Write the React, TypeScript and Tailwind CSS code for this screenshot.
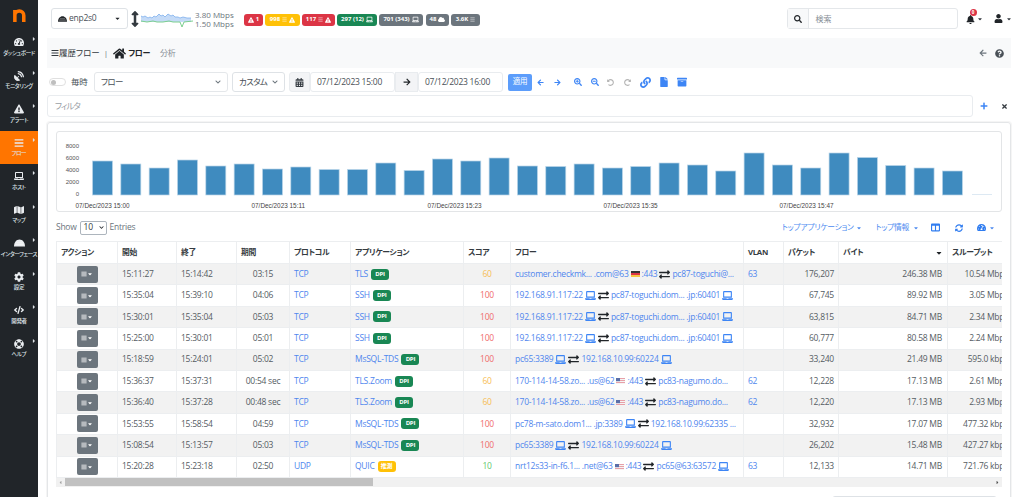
import React from 'react';
import {
  FaArchive, FaArrowLeft, FaArrowRight, FaBars, FaBell, FaCalendarAlt, FaCaretDown, FaChevronDown, FaCloud, FaCode,
  FaCog, FaColumns, FaExchangeAlt, FaExclamationTriangle, FaFile, FaHome, FaLaptop, FaLifeRing, FaLink, FaMap,
  FaPlus, FaQuestionCircle, FaRedoAlt, FaSatelliteDish, FaSearch, FaSearchMinus, FaSearchPlus, FaSyncAlt, FaTachometerAlt,
  FaTimes, FaUndoAlt, FaUser, FaArrowsAltV, FaCaretRight, FaCaretLeft,
} from 'react-icons/fa';

// half dome used by ntopng for network interfaces
const IfaceIcon = ({ className }: { className?: string }) => (
  <svg viewBox="0 0 16 10" className={className} fill="currentColor">
    <path d="M0 10C0 4 3.5 0 8 0s8 4 8 10H0z" />
    <path d="M2 7h12M3.5 4.5h9" stroke="#ffffff" strokeWidth="0.6" />
  </svg>
);

const NAV = [
  { label: 'ダッシュボード', icon: <FaTachometerAlt /> },
  { label: 'モニタリング', icon: <FaSatelliteDish /> },
  { label: 'アラート', icon: <FaExclamationTriangle /> },
  { label: 'フロー', icon: <FaBars />, active: true },
  { label: 'ホスト', icon: <FaLaptop /> },
  { label: 'マップ', icon: <FaMap /> },
  { label: 'インターフェース', icon: <IfaceIcon className="w-[11px] h-[8px]" /> },
  { label: '設定', icon: <FaCog /> },
  { label: '開発者', icon: <FaCode /> },
  { label: 'ヘルプ', icon: <FaLifeRing /> },
];

const BARS = [
  34, 31, 27, 35, 29, 31, 26, 28, 25.5, 25.5, 32, 24.5, 36, 34, 37, 29, 28.5, 31, 27, 28.5, 32, 30, 24, 42, 30, 27, 42, 37.5, 29.5, 27, 24,
];

type Flow = string[];

interface Row {
  start: string;
  end: string;
  dur: string;
  proto: string;
  app: string;
  score: number;
  flow: Flow;
  vlan: string;
  pkts: string;
  bytes: string;
  tput: string;
  guess?: boolean;
}

const SSH: Flow = ['192.168.91.117:22', 'laptop', 'swap', 'pc87-toguchi.dom... .jp:60401', 'laptop'];
const PC65: Flow = ['pc65:3389', 'laptop', 'swap', '192.168.10.99:60224', 'laptop'];
const ZOOM: Flow = ['170-114-14-58.zo... .us@62', 'us', ':443', 'swap', 'pc83-nagumo.do...'];

const ROWS: Row[] = [
  { start: '15:11:27', end: '15:14:42', dur: '03:15', proto: 'TCP', app: 'TLS', score: 60, flow: ['customer.checkmk... .com@63', 'de', ':443', 'swap', 'pc87-toguchi@...'], vlan: '63', pkts: '176,207', bytes: '246.38 MB', tput: '10.54 Mbps' },
  { start: '15:35:04', end: '15:39:10', dur: '04:06', proto: 'TCP', app: 'SSH', score: 100, flow: SSH, vlan: '', pkts: '67,745', bytes: '89.92 MB', tput: '3.05 Mbps' },
  { start: '15:30:01', end: '15:35:04', dur: '05:03', proto: 'TCP', app: 'SSH', score: 100, flow: SSH, vlan: '', pkts: '63,815', bytes: '84.71 MB', tput: '2.34 Mbps' },
  { start: '15:25:00', end: '15:30:01', dur: '05:01', proto: 'TCP', app: 'SSH', score: 100, flow: SSH, vlan: '', pkts: '60,777', bytes: '80.58 MB', tput: '2.24 Mbps' },
  { start: '15:18:59', end: '15:24:01', dur: '05:02', proto: 'TCP', app: 'MsSQL-TDS', score: 100, flow: PC65, vlan: '', pkts: '33,240', bytes: '21.49 MB', tput: '595.0 kbps' },
  { start: '15:36:37', end: '15:37:31', dur: '00:54 sec', proto: 'TCP', app: 'TLS.Zoom', score: 60, flow: ZOOM, vlan: '62', pkts: '12,228', bytes: '17.13 MB', tput: '2.61 Mbps' },
  { start: '15:36:40', end: '15:37:28', dur: '00:48 sec', proto: 'TCP', app: 'TLS.Zoom', score: 60, flow: ZOOM, vlan: '62', pkts: '12,220', bytes: '17.13 MB', tput: '2.93 Mbps' },
  { start: '15:53:55', end: '15:58:54', dur: '04:59', proto: 'TCP', app: 'MsSQL-TDS', score: 100, flow: ['pc78-m-sato.dom1... .jp:3389', 'laptop', 'swap', '192.168.10.99:62335 ...'], vlan: '', pkts: '32,932', bytes: '17.07 MB', tput: '477.32 kbps' },
  { start: '15:08:54', end: '15:13:57', dur: '05:03', proto: 'TCP', app: 'MsSQL-TDS', score: 100, flow: PC65, vlan: '', pkts: '26,202', bytes: '15.48 MB', tput: '427.27 kbps' },
  { start: '15:20:28', end: '15:23:18', dur: '02:50', proto: 'UDP', app: 'QUIC', score: 10, guess: true, flow: ['nrt12s33-in-f6.1... .net@63', 'us', ':443', 'swap', 'pc65@63:63572', 'laptop'], vlan: '63', pkts: '12,133', bytes: '14.71 MB', tput: '721.76 kbps' },
];

const HEADERS = ['アクション', '開始', '終了', '期間', 'プロトコル', 'アプリケーション', 'スコア', 'フロー', 'VLAN', 'パケット', 'バイト', 'スループット'];

const Flag = ({ code }: { code: string }) =>
  code === 'de' ? (
    <svg viewBox="0 0 9 6" className="w-[9px] h-[6px] shrink-0">
      <rect width="9" height="2" fill="#333333" />
      <rect y="2" width="9" height="2" fill="#dc3545" />
      <rect y="4" width="9" height="2" fill="#f5c542" />
    </svg>
  ) : (
    <svg viewBox="0 0 9 6" className="w-[9px] h-[6px] shrink-0">
      <rect width="9" height="6" fill="#e8a0a8" />
      <rect y="1" width="9" height="1" fill="#f4f4f4" />
      <rect y="3" width="9" height="1" fill="#f4f4f4" />
      <rect y="5" width="9" height="1" fill="#f4f4f4" />
      <rect width="4" height="3.2" fill="#5a6fa8" />
    </svg>
  );

const FlowCell = ({ flow }: { flow: Flow }) => (
  <div className="flex items-center gap-[2px] whitespace-nowrap text-[#4f86ee]">
    {flow.map((t, i) => {
      if (t === 'laptop') return <FaLaptop key={i} className="shrink-0 text-[11px] text-[#3d85f5]" />;
      if (t === 'swap') return <FaExchangeAlt key={i} className="shrink-0 text-[11px] text-[#212529]" />;
      if (t === 'de' || t === 'us') return <Flag key={i} code={t} />;
      return <span key={i}>{t}</span>;
    })}
  </div>
);

const Sparkline = () => (
  <svg viewBox="0 0 52 16" className="w-[52px] h-[16px]">
    <path d="M0 5l2 1 2-1 3 2 2-1 2 1 2-2 2 1 3-3 2 2 2-1 2 2 3-3 3 2 2-1 2 2 3 0 2 1 3-1 4 1 4 0v4H0z" fill="#c5dbf7" />
    <path d="M0 5l2 1 2-1 3 2 2-1 2 1 2-2 2 1 3-3 2 2 2-1 2 2 3-3 3 2 2-1 2 2 3 0 2 1 3-1 4 1 4 0" fill="none" stroke="#7fb0ee" strokeWidth="0.8" />
    <path d="M0 10l6 1 6-1 4 1 6 0 6-1 4 1 7 0 2 5 2-5 9-1" fill="none" stroke="#7ccf8e" strokeWidth="1" />
  </svg>
);

const Badge = ({ className, children }: { className: string; children: React.ReactNode }) => (
  <span className={`flex items-center justify-center gap-[2px] h-[12px] rounded-[3px] text-white text-[6px] font-bold whitespace-nowrap ${className}`}>
    {children}
  </span>
);

export default function App() {
  return (
    <div className="flex h-screen overflow-hidden bg-white text-[#212529] [font-family:'Open_Sans','Noto_Sans_CJK_JP',sans-serif] [font-feature-settings:'palt']">
      {/* Sidebar */}
      <aside className="w-[38px] shrink-0 bg-[#212529] flex flex-col text-white">
        <div className="h-[30px] flex items-center justify-center">
          <svg viewBox="0 0 14 14" className="w-[13px] h-[13px]">
            <path d="M2 14V1M2 7a4.8 4.8 0 0 1 9.6 0v7" fill="none" stroke="#ff7500" strokeWidth="3.8" />
          </svg>
        </div>
        {NAV.map((n) => (
          <div
            key={n.label}
            className={`relative h-[33.5px] flex flex-col items-center justify-center gap-[1px] ${n.active ? 'bg-[#ff7500]' : ''}`}
          >
            <span className="h-[11px] flex items-center text-[10px] text-[#e9ecef]">{n.icon}</span>
            <span className="text-[5.5px] tracking-[-0.3px] leading-[8px] whitespace-nowrap text-[#dee2e6] font-medium">{n.label}</span>
            <FaCaretRight className="absolute right-[1px] top-[6px] text-[6px] text-[#dee2e6]" />
          </div>
        ))}
      </aside>

      <main className="flex-1 min-w-0 flex flex-col pl-[9px] pr-[13px]">
        {/* Top bar */}
        <header className="h-[38px] shrink-0 flex items-center pb-[1px]">
          <div className="ml-[4px] w-[77px] h-[21px] border border-[#dee2e6] rounded-[3px] flex items-center px-[6px] gap-[2px] text-[8.5px] tracking-[-0.25px] text-[#495057]">
            <IfaceIcon className="w-[9px] h-[6px] text-[#212529]" />
            <span>enp2s0</span>
            <FaCaretDown className="ml-auto text-[7px] text-[#212529]" />
          </div>
          <FaArrowsAltV className="ml-[-1px] text-[16px] text-[#343a40]" />
          <div className="ml-[-2px]">
            <Sparkline />
          </div>
          <div className="ml-[2px] mt-[1px] w-[44px] text-[8px] leading-[9px] text-[#6c757d] whitespace-nowrap">
            <div>3.80 Mbps</div>
            <div>1.50 Mbps</div>
          </div>
          <div className="ml-[5px] mt-[2px] flex items-center gap-[2px]">
            <Badge className="w-[19px] bg-[#dc3545]">
              <FaExclamationTriangle className="text-[6px]" />1
            </Badge>
            <Badge className="w-[35px] bg-[#ffc107]">
              998 <FaBars className="text-[5px] opacity-70" /> <FaExclamationTriangle className="text-[6px]" />
            </Badge>
            <Badge className="w-[33px] bg-[#dc3545]">
              117 <FaBars className="text-[5px] opacity-70" /> <FaExclamationTriangle className="text-[6px]" />
            </Badge>
            <Badge className="w-[40px] bg-[#198754]">
              297 (12) <FaLaptop className="text-[7px]" />
            </Badge>
            <Badge className="w-[44px] bg-[#6c757d]">
              701 (343) <FaLaptop className="text-[7px]" />
            </Badge>
            <Badge className="w-[23px] ml-[1px] bg-[#6c757d]">
              48 <FaCloud className="text-[7px]" />
            </Badge>
            <Badge className="w-[29px] bg-[#6c757d]">
              3.6K <FaBars className="text-[5px] opacity-70" />
            </Badge>
          </div>
          <div className="ml-auto mr-[-1px] flex items-center">
            <div className="flex h-[21px] w-[171px] border border-[#e4e7ea] rounded-[3px]">
              <div className="w-[21px] bg-[#f8f9fa] border-r border-[#e4e7ea] flex items-center justify-center">
                <FaSearch className="text-[8px] text-[#212529]" />
              </div>
              <span className="pl-[7px] flex items-center text-[8px] text-[#868e96]">検索</span>
            </div>
            <div className="relative ml-[8px] flex items-center">
              <FaBell className="text-[9px] text-[#212529] mt-[2px]" />
              <span className="absolute left-[4px] top-[-4px] w-[7px] h-[7px] rounded-full bg-[#dc3545] text-white text-[4.5px] font-bold flex items-center justify-center">
                0
              </span>
              <FaCaretDown className="ml-[2px] text-[6px] text-[#343a40]" />
            </div>
            <div className="ml-[11.5px] flex items-center">
              <FaUser className="text-[9px] text-[#212529]" />
              <FaCaretDown className="ml-[3px] text-[6px] text-[#343a40]" />
            </div>
          </div>
        </header>

        {/* Breadcrumb */}
        <div className="h-[30px] shrink-0 bg-[#f8f9fa] flex items-center pl-[4px] pr-[7px] text-[#343a40]">
          <FaBars className="text-[8px]" />
          <span className="text-[8.5px]">履歴フロー</span>
          <span className="ml-[4px] text-[8px] text-[#6c757d]">|</span>
          <FaHome className="ml-[5px] text-[13px] text-[#212529]" />
          <span className="ml-[2px] text-[8px] tracking-[-0.4px] font-bold text-[#212529]">フロー</span>
          <span className="ml-[10px] text-[8px] text-[#868e96]">分析</span>
          <FaArrowLeft className="ml-auto text-[8px] text-[#6c757d]" />
          <FaQuestionCircle className="ml-[8px] text-[9px] text-[#495057]" />
        </div>

        {/* Toolbar */}
        <div className="h-[20px] mt-[4px] shrink-0 flex items-stretch text-[8.5px] tracking-[-0.25px] text-[#495057]">
          <div className="flex items-center ml-[2px] w-[45px]">
            <span className="w-[17px] h-[8px] rounded-full border border-[#e0e0e0] flex items-center pl-[1px]">
              <span className="w-[5px] h-[5px] rounded-full bg-[#bfbfbf]" />
            </span>
            <span className="ml-[5px]">毎時</span>
          </div>
          <div className="w-[134px] border border-[#e4e7ea] rounded-[3px] flex items-center justify-between px-[6px]">
            <span className="tracking-[-0.7px]">フロー</span>
            <FaChevronDown className="text-[6px] text-[#6c757d]" />
          </div>
          <div className="ml-[4px] w-[53px] border border-[#dee2e6] rounded-[3px] flex items-center justify-between px-[6px]">
            <span className="tracking-[-0.7px]">カスタム</span>
            <FaChevronDown className="text-[6px] text-[#6c757d]" />
          </div>
          <div className="ml-[4px] w-[21px] bg-[#f3f4f6] border border-[#e9ecef] rounded-l-[3px] flex items-center justify-center">
            <FaCalendarAlt className="text-[9px] text-[#343a40]" />
          </div>
          <div className="w-[85px] border border-[#e9ecef] rounded-[3px] flex items-center pl-[6px]">07/12/2023 15:00</div>
          <div className="w-[23px] bg-[#f3f4f6] border border-[#e9ecef] flex items-center justify-center">
            <FaArrowRight className="text-[8px] text-[#212529]" />
          </div>
          <div className="w-[85px] border border-[#e9ecef] rounded-[3px] flex items-center pl-[6px]">07/12/2023 16:00</div>
          <div className="ml-[5px] w-[24px] h-[17px] self-center bg-[#5c9dfb] rounded-[2px] text-white text-[7.5px] flex items-center justify-center">
            適用
          </div>
          <div className="flex items-center text-[#3d85f5]">
            <FaArrowLeft className="ml-[5px] text-[7px]" />
            <FaArrowRight className="ml-[10px] text-[7px]" />
            <FaSearchPlus className="ml-[12.5px] text-[8px]" />
            <FaSearchMinus className="ml-[9px] text-[8px]" />
            <FaUndoAlt className="ml-[8.5px] text-[7px] text-[#b5b5b5]" />
            <FaRedoAlt className="ml-[10px] text-[7px] text-[#b5b5b5]" />
            <FaLink className="ml-[9px] text-[11px]" />
            <FaFile className="ml-[8px] text-[10px]" />
            <FaArchive className="ml-[8px] text-[10px]" />
          </div>
        </div>

        {/* Filter */}
        <div className="h-[22px] mt-[3px] shrink-0 flex items-center">
          <div className="w-[926px] h-full border border-[#e9ecef] rounded-[3px] flex items-center pl-[7px] text-[8.5px] tracking-[-1px] text-[#9aa0a6]">
            フィルタ
          </div>
          <FaPlus className="ml-[7px] text-[8px] text-[#3d85f5]" />
          <FaTimes className="ml-[13px] text-[7px] text-[#343a40]" />
        </div>

        {/* Card */}
        <section className="mt-[5px] flex-1 border border-[#e4e6e8] rounded-[3px] px-[8px] pt-[8px] shadow-[0_0_0_1px_#f5f5f5]">
          <div className="h-[81px] border border-[#e3e5e7] rounded-[3px]">
            <svg viewBox="0 0 944 79" className="w-[944px] h-[79px]">
              {[8000, 6000, 4000, 2000, 0].map((v, i) => (
                <text key={v} x="22" y={16 + i * 12} textAnchor="end" fontSize="6" fill="#555555" fontFamily="Liberation Sans">
                  {v}
                </text>
              ))}
              {BARS.map((h, i) => (
                <rect key={i} x={35.5 + i * 28.33} y={63 - h} width="20" height={h} fill="#3f8bbf" stroke="#b9d5e8" strokeWidth="0.7" />
              ))}
              <line x1="935" y1="62.5" x2="915" y2="62.5" stroke="#cfe0ee" strokeWidth="0.7" />
              {['15:00', '15:11', '15:23', '15:35', '15:47'].map((t, i) => (
                <text key={t} x={18.5 + i * 176} y="76" fontSize="6.4" fill="#444444" fontFamily="Liberation Sans">
                  07/Dec/2023 {t}
                </text>
              ))}
            </svg>
          </div>

          {/* Datatable controls */}
          <div className="h-[29px] pt-[2px] flex items-center text-[8.5px] tracking-[-0.25px] text-[#6c757d]">
            <span>Show</span>
            <span className="mx-[3px] w-[27px] h-[14px] border border-[#adb5bd] rounded-[2px] flex items-center pl-[3px] text-[#343a40] text-[8.5px]">
              10
              <FaChevronDown className="ml-auto mr-[2px] text-[5px] text-[#212529]" />
            </span>
            <span>Entries</span>
            <div className="ml-auto flex items-center mr-[7px] text-[#4d8bf0]">
              <span className="text-[7.8px] tracking-[-0.3px]">トップアプリケーション</span>
              <FaCaretDown className="ml-[2px] text-[6px]" />
              <span className="ml-[14px] text-[7.8px] tracking-[-0.3px]">トップ情報</span>
              <FaCaretDown className="ml-[4px] text-[6px]" />
              <FaColumns className="ml-[12px] text-[9px] text-[#2f7cf0]" />
              <FaSyncAlt className="ml-[15px] text-[8px] text-[#2f7cf0]" />
              <FaTachometerAlt className="ml-[14px] text-[9px] text-[#2f7cf0]" />
              <FaCaretDown className="ml-[3px] text-[6px]" />
            </div>
          </div>

          {/* Table */}
          <div className="overflow-hidden">
            <table className="table-fixed w-[990px] border-collapse text-[8.5px] tracking-[-0.25px] text-[#555c63]">
              <colgroup>
                <col className="w-[61px]" />
                <col className="w-[59px]" />
                <col className="w-[60px]" />
                <col className="w-[53px]" />
                <col className="w-[61px]" />
                <col className="w-[113px]" />
                <col className="w-[47px]" />
                <col className="w-[233px]" />
                <col className="w-[40px]" />
                <col className="w-[55px]" />
                <col className="w-[109px]" />
                <col className="w-[99px]" />
              </colgroup>
              <thead>
                <tr className="h-[22px] text-[#343a40]">
                  {HEADERS.map((h) => (
                    <th key={h} className="relative border border-[#eceef0] px-[4px] text-left text-[7.8px] tracking-[-0.3px] font-bold whitespace-nowrap">
                      {h}
                      {h === 'バイト' && <FaCaretDown className="absolute right-[4px] top-[7px] text-[8px] text-[#212529]" />}
                    </th>
                  ))}
                </tr>
              </thead>
              <tbody>
                {ROWS.map((r, i) => (
                  <tr key={i} className={`h-[21.4px] ${i % 2 === 0 ? 'bg-[#f2f2f2]' : 'bg-white'}`}>
                    <td className="border border-[#eceef0] p-0">
                      <div className="mx-auto w-[21px] h-[17px] bg-[#6c757d] rounded-[2px] flex items-center justify-center text-white">
                        <FaBars className="text-[6px]" />
                        <FaCaretDown className="text-[6px]" />
                      </div>
                    </td>
                    <td className="border border-[#eceef0] px-[4px]">{r.start}</td>
                    <td className="border border-[#eceef0] px-[4px]">{r.end}</td>
                    <td className="border border-[#eceef0] px-[4px] text-center whitespace-nowrap">{r.dur}</td>
                    <td className="border border-[#eceef0] px-[4px] text-[#4f86ee]">{r.proto}</td>
                    <td className="border border-[#eceef0] px-[4px]">
                      <div className="flex items-center gap-[3px] text-[#4f86ee]">
                        <span>{r.app}</span>
                        {r.guess ? (
                          <span className="h-[11px] w-[18px] justify-center rounded-[3px] bg-[#ffc107] text-white text-[6px] font-bold flex items-center">推測</span>
                        ) : (
                          <span className="h-[11px] w-[18px] justify-center rounded-[3px] bg-[#198754] text-white text-[6px] font-bold flex items-center">DPI</span>
                        )}
                      </div>
                    </td>
                    <td
                      className={`border border-[#eceef0] px-[4px] text-center ${
                        r.score === 100 ? 'text-[#f06c6c]' : r.score === 60 ? 'text-[#f7bd55]' : 'text-[#5fc870]'
                      }`}
                    >
                      {r.score}
                    </td>
                    <td className="border border-[#eceef0] px-[4px] overflow-hidden">
                      <FlowCell flow={r.flow} />
                    </td>
                    <td className="border border-[#eceef0] px-[4px] text-[#4f86ee]">{r.vlan}</td>
                    <td className="border border-[#eceef0] px-[4px] text-right">{r.pkts}</td>
                    <td className="border border-[#eceef0] pl-[4px] pr-[5px] text-right">{r.bytes}</td>
                    <td className="border border-[#eceef0] px-[4px] whitespace-nowrap">
                      <div className="w-[56px] text-right whitespace-nowrap">{r.tput}</div>
                    </td>
                  </tr>
                ))}
              </tbody>
            </table>
          </div>

          {/* Scrollbar */}
          <div className="h-[9px] bg-[#f1f1f1] flex items-center">
            <FaCaretLeft className="w-[9px] text-[5px] text-[#a3a3a3]" />
            <div className="w-[308px] h-[8px] bg-[#c1c1c1]" />
            <FaCaretRight className="ml-auto w-[9px] text-[5px] text-[#505050]" />
          </div>

          {/* Pagination */}
          <div className="mt-[9px] ml-[776px] w-[165px] h-[20px] flex border border-[#dee2e6] rounded-[3px]">
            <span className="w-[20px] bg-[#e9ecef]" />
            <span className="w-[19px] bg-[#0d6efd]" />
          </div>
        </section>
      </main>
    </div>
  );
}
